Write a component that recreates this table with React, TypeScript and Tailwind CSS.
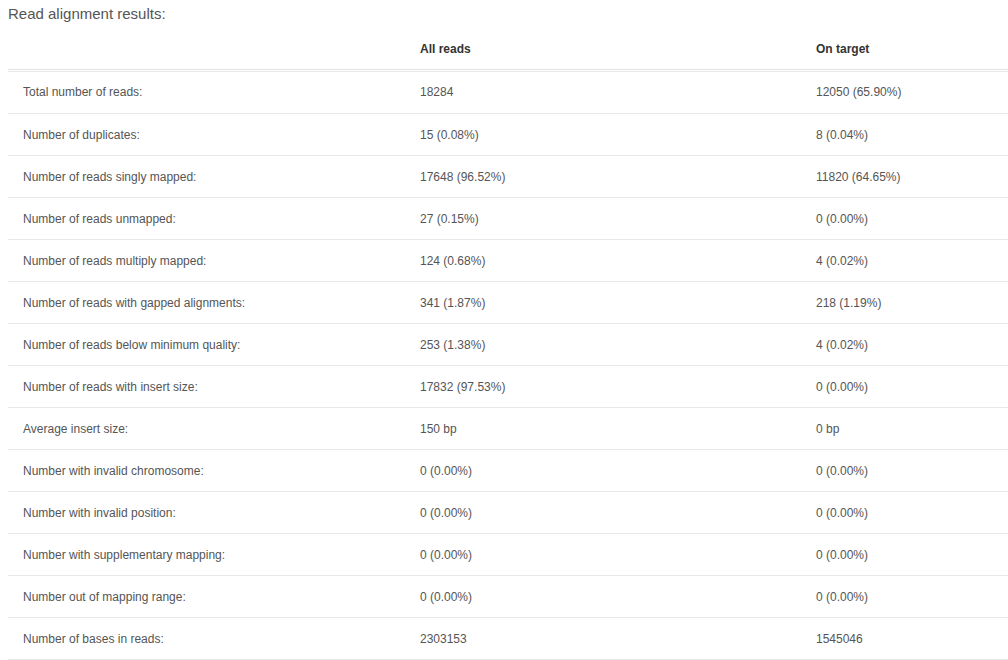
const rows: [string, string, string][] = [
  ['Total number of reads:', '18284', '12050 (65.90%)'],
  ['Number of duplicates:', '15 (0.08%)', '8 (0.04%)'],
  ['Number of reads singly mapped:', '17648 (96.52%)', '11820 (64.65%)'],
  ['Number of reads unmapped:', '27 (0.15%)', '0 (0.00%)'],
  ['Number of reads multiply mapped:', '124 (0.68%)', '4 (0.02%)'],
  ['Number of reads with gapped alignments:', '341 (1.87%)', '218 (1.19%)'],
  ['Number of reads below minimum quality:', '253 (1.38%)', '4 (0.02%)'],
  ['Number of reads with insert size:', '17832 (97.53%)', '0 (0.00%)'],
  ['Average insert size:', '150 bp', '0 bp'],
  ['Number with invalid chromosome:', '0 (0.00%)', '0 (0.00%)'],
  ['Number with invalid position:', '0 (0.00%)', '0 (0.00%)'],
  ['Number with supplementary mapping:', '0 (0.00%)', '0 (0.00%)'],
  ['Number out of mapping range:', '0 (0.00%)', '0 (0.00%)'],
  ['Number of bases in reads:', '2303153', '1545046'],
]

export default function App() {
  return (
    <div className="h-[660px] w-[1008px] overflow-hidden bg-white font-['Liberation_Sans',Arial,sans-serif] text-[#555]">
      <div className="pl-2 text-[15px] leading-[28px]">Read alignment results:</div>
      <table className="ml-2 w-[1189px] table-fixed border-separate border-spacing-0 text-[12px]">
        <colgroup>
          <col className="w-[397px]" />
          <col className="w-[396px]" />
          <col className="w-[396px]" />
        </colgroup>
        <thead>
          <tr>
            <th className="h-[42px] border-b border-[#e3e3e3] px-[15px] text-left font-bold text-[#333]"></th>
            <th className="h-[42px] border-b border-[#e3e3e3] px-[15px] text-left font-bold text-[#333]">All reads</th>
            <th className="h-[42px] border-b border-[#e3e3e3] px-[15px] text-left font-bold text-[#333]">On target</th>
          </tr>
          <tr>
            <td colSpan={3} className="h-px p-0"></td>
          </tr>
        </thead>
        <tbody>
          {rows.map(([label, all, onTarget], i) => {
            const cell =
              i === 0
                ? 'h-[43px] border-y border-[#e8e8e8] px-[15px] pb-px'
                : 'h-[42px] border-b border-[#e8e8e8] px-[15px]'
            return (
              <tr key={label}>
                <td className={cell}>{label}</td>
                <td className={cell}>{all}</td>
                <td className={cell}>{onTarget}</td>
              </tr>
            )
          })}
        </tbody>
      </table>
    </div>
  )
}
